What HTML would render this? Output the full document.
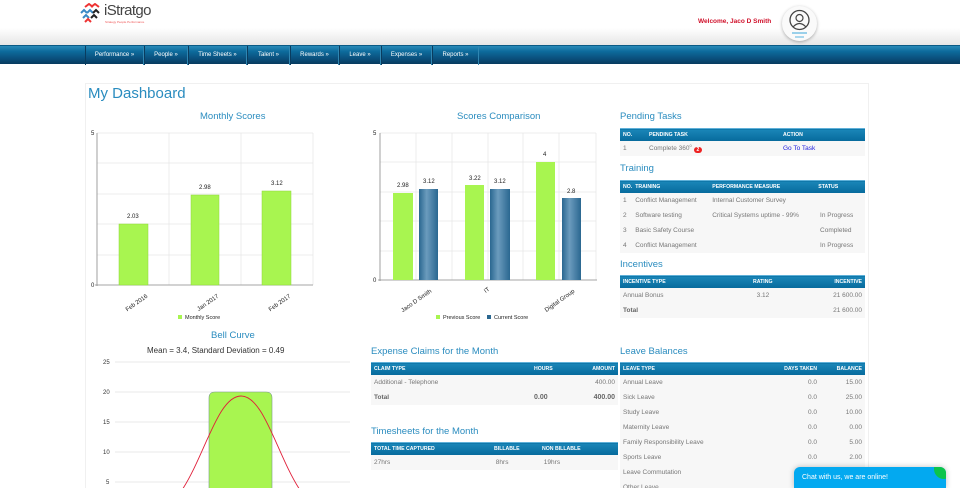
<!DOCTYPE html>
<html style="width:960px;height:488px;overflow:hidden"><head><meta charset="utf-8"><style>
*{margin:0;padding:0;box-sizing:border-box}
body{width:960px;height:488px;overflow:hidden;background:#fff;font-family:"Liberation Sans",sans-serif;position:relative}
.hdr{position:absolute;left:0;top:0;width:960px;height:45px;background:linear-gradient(#fff 0,#fff 28px,#e6e6e6 45px)}
.nav{position:absolute;left:0;top:45px;width:960px;height:19px;background:linear-gradient(#2a8ab8 0,#0d6b9c 30%,#0a4f7c 70%,#073a5e 100%);border-top:1px solid #0a5a85}
.nav div{position:absolute;top:0;height:19px;line-height:19px;font-size:6px;color:#fff;text-align:center;border-left:1px solid #0a3c5e;border-right:1px solid #2f86b2}
.abs{position:absolute}
.t{position:absolute;color:#2a8cbf;font-size:9.5px}
table{border-collapse:collapse;position:absolute;font-size:6.5px;color:#777;background:#f7f7f7}
th{background:linear-gradient(#1a86b8,#066a9c);color:#fff;font-size:5.2px;font-weight:bold;text-align:left;height:12px;padding:0 3px;border-top:1px solid #5fb0d8}
td{height:15px;padding:0 3px}
td b{color:#666}
.r{text-align:right}
</style></head><body>
<div class="hdr"></div>
<svg class="abs" style="left:80px;top:3px" width="22" height="20" viewBox="0 0 22 20">
<path d="M5 4 L9 1 L13 4" stroke="#e33" stroke-width="2" fill="none"/><path d="M11 4 L15 1 L19 4" stroke="#e33" stroke-width="2" fill="none"/>
<path d="M1 10 L4 7 L7 10" stroke="#3a8ac6" stroke-width="2" fill="none"/><path d="M7 10 L10 7 L13 10" stroke="#3a8ac6" stroke-width="2" fill="none"/><path d="M13 10 L16 7 L19 10" stroke="#222" stroke-width="2" fill="none"/>
<path d="M3 15 L6 12 L9 15" stroke="#3a8ac6" stroke-width="2" fill="none"/><path d="M11 15 L14 12 L17 15" stroke="#222" stroke-width="2" fill="none"/>
<path d="M5 19 L8 16 L11 19" stroke="#e33" stroke-width="2" fill="none"/></svg>
<div class="abs" style="left:104px;top:2px;font-size:15px;color:#444;letter-spacing:-0.6px">iStratgo</div>
<div class="abs" style="left:105px;top:20px;font-size:3px;color:#e55">Strategy People Performance</div>
<div class="abs" style="left:698px;top:18px;font-size:6.5px;color:#d0102a;font-weight:bold">Welcome, Jaco D Smith</div>
<div class="abs" style="left:782px;top:6px;width:35px;height:35px;border-radius:50%;background:#fafafa;box-shadow:0 1px 3px rgba(0,0,0,.3)"></div>
<svg class="abs" style="left:787px;top:8px" width="25" height="30" viewBox="0 0 25 30"><circle cx="12.5" cy="12" r="9.5" fill="none" stroke="#444" stroke-width="1.3"/><circle cx="12.5" cy="10" r="3.5" fill="none" stroke="#444" stroke-width="1.2"/><path d="M6 19 Q12.5 12 19 19" fill="none" stroke="#444" stroke-width="1.2"/><line x1="5" y1="25" x2="20" y2="25" stroke="#5ab4e0" stroke-width="1.2"/><line x1="8" y1="29" x2="17" y2="29" stroke="#5ab4e0" stroke-width="1"/></svg>
<div class="nav">
<div style="left:85px;width:59px">Performance »</div><div style="left:144px;width:44px">People »</div><div style="left:188px;width:59px">Time Sheets »</div><div style="left:247px;width:43px">Talent »</div><div style="left:290px;width:49px">Rewards »</div><div style="left:339px;width:42px">Leave »</div><div style="left:381px;width:51px">Expenses »</div><div style="left:432px;width:47px">Reports »</div>
</div>
<div class="abs" style="left:85px;top:83px;width:784px;height:420px;border:1px solid #f0f0f0;background:#fff"></div>
<div class="abs" style="left:88px;top:85px;font-size:15px;color:#2a8cbf">My Dashboard</div>

<div class="t" style="left:200px;top:111px">Monthly Scores</div>
<svg class="abs" style="left:85px;top:125px" width="240" height="200" viewBox="85 125 240 200" font-family="Liberation Sans" font-size="6" fill="#222">
<g stroke="#e6e6e6" stroke-width="0.7"><line x1="97" y1="133" x2="313" y2="133"/><line x1="97" y1="163" x2="313" y2="163"/><line x1="97" y1="194" x2="313" y2="194"/><line x1="97" y1="224" x2="313" y2="224"/><line x1="97" y1="255" x2="313" y2="255"/><line x1="169" y1="133" x2="169" y2="285"/><line x1="241" y1="133" x2="241" y2="285"/><line x1="313" y1="133" x2="313" y2="285"/></g>
<line x1="97" y1="133" x2="97" y2="286" stroke="#888" stroke-width="0.8"/><line x1="95" y1="285" x2="313" y2="285" stroke="#888" stroke-width="0.8"/>
<text x="91" y="135">5</text><text x="91" y="287">0</text>
<g fill="#a8f550" stroke="#8ed63a" stroke-width="0.5"><rect x="119" y="224" width="29" height="61"/><rect x="191" y="195" width="28" height="90"/><rect x="262" y="191" width="29" height="94"/></g>
<text x="127" y="218">2.03</text><text x="199" y="189">2.98</text><text x="271" y="185">3.12</text>
<text transform="translate(148,297) rotate(-35)" text-anchor="end">Feb 2016</text><text transform="translate(219,297) rotate(-35)" text-anchor="end">Jan 2017</text><text transform="translate(291,297) rotate(-35)" text-anchor="end">Feb 2017</text>
<rect x="178" y="315" width="4" height="4" fill="#a8f550"/><text x="185" y="319" font-size="5.5">Monthly Score</text>
</svg>

<div class="t" style="left:457px;top:111px">Scores Comparison</div>
<svg class="abs" style="left:365px;top:125px" width="245" height="200" viewBox="365 125 245 200" font-family="Liberation Sans" font-size="6" fill="#222">
<g stroke="#e6e6e6" stroke-width="0.7"><line x1="380" y1="133" x2="596" y2="133"/><line x1="380" y1="162" x2="596" y2="162"/><line x1="380" y1="192" x2="596" y2="192"/><line x1="380" y1="221" x2="596" y2="221"/><line x1="380" y1="251" x2="596" y2="251"/><line x1="416" y1="133" x2="416" y2="280"/><line x1="452" y1="133" x2="452" y2="280"/><line x1="488" y1="133" x2="488" y2="280"/><line x1="523" y1="133" x2="523" y2="280"/><line x1="559" y1="133" x2="559" y2="280"/><line x1="596" y1="133" x2="596" y2="280"/></g>
<line x1="380" y1="133" x2="380" y2="281" stroke="#888" stroke-width="0.8"/><line x1="378" y1="280" x2="597" y2="280" stroke="#888" stroke-width="0.8"/>
<text x="373" y="135">5</text><text x="373" y="282">0</text>
<defs><linearGradient id="bl" x1="0" x2="1"><stop offset="0" stop-color="#2a6790"/><stop offset=".4" stop-color="#6b9bbd"/><stop offset="1" stop-color="#2a6790"/></linearGradient></defs>
<g fill="#a8f550"><rect x="393" y="193" width="20" height="87"/><rect x="465" y="185" width="19" height="95"/><rect x="536" y="162" width="19" height="118"/></g>
<g fill="url(#bl)"><rect x="419" y="189" width="19" height="91"/><rect x="490" y="189" width="20" height="91"/><rect x="562" y="198" width="19" height="82"/></g>
<text x="397" y="187">2.98</text><text x="423" y="183">3.12</text><text x="469" y="180">3.22</text><text x="494" y="183">3.12</text><text x="543" y="156">4</text><text x="567" y="193">2.8</text>
<text transform="translate(432,292) rotate(-35)" text-anchor="end">Jaco D Smith</text><text transform="translate(490,290) rotate(-35)" text-anchor="end">IT</text><text transform="translate(575,292) rotate(-35)" text-anchor="end">Digital Group</text>
<rect x="436" y="315" width="4" height="4" fill="#a8f550"/><text x="443" y="319" font-size="5.5">Previous Score</text><rect x="487" y="315" width="4" height="4" fill="#2a6790"/><text x="494" y="319" font-size="5.5">Current Score</text>
</svg>

<div class="t" style="left:211px;top:330px">Bell Curve</div>
<div class="abs" style="left:147px;top:346px;font-size:8px;color:#333">Mean = 3.4, Standard Deviation = 0.49</div>
<svg class="abs" style="left:95px;top:355px" width="260" height="133" viewBox="95 355 260 133" font-family="Liberation Sans" font-size="6" fill="#333">
<g stroke="#e3e3e3" stroke-width="0.8"><line x1="115" y1="362" x2="350" y2="362"/><line x1="115" y1="392" x2="350" y2="392"/><line x1="115" y1="422" x2="350" y2="422"/><line x1="115" y1="452" x2="350" y2="452"/><line x1="115" y1="482" x2="350" y2="482"/></g>
<text x="103" y="364">25</text><text x="103" y="394">20</text><text x="103" y="424">15</text><text x="103" y="454">10</text><text x="106" y="484">5</text>
<path d="M209 500 V398 Q209 392 215 392 H266 Q272 392 272 398 V500 Z" fill="#a8f550" stroke="#7a9a8a" stroke-width="0.6"/>
<path d="M182 490 C205 455 218 396 241 396 C264 396 277 455 300 490" fill="none" stroke="#e0203a" stroke-width="0.9"/>
</svg>

<div class="t" style="left:620px;top:111px">Pending Tasks</div>
<table style="left:620px;top:128px;width:245px">
<tr><th style="width:26px">NO.</th><th style="width:134px">PENDING TASK</th><th>ACTION</th></tr>
<tr><td>1</td><td>Complete 360<sup style="font-size:4px">0</sup> <span style="background:#e22;color:#fff;border-radius:4px;padding:0 3px;font-size:5px;font-weight:bold">2</span></td><td style="color:#2222dd">Go To Task</td></tr></table>
<div class="t" style="left:620px;top:163px">Training</div>
<table style="left:620px;top:180px;width:245px">
<tr><th style="width:12px;padding-right:0">NO.</th><th style="width:77px">TRAINING</th><th style="width:106px">PERFORMANCE MEASURE</th><th>STATUS</th></tr>
<tr><td>1</td><td>Conflict Management</td><td>Internal Customer Survey</td><td></td></tr>
<tr><td>2</td><td>Software testing</td><td>Critical Systems uptime - 99%</td><td>&nbsp;In Progress</td></tr>
<tr><td>3</td><td>Basic Safety Course</td><td></td><td>&nbsp;Completed</td></tr>
<tr><td>4</td><td>Conflict Management</td><td></td><td>&nbsp;In Progress</td></tr></table>
<div class="t" style="left:620px;top:259px">Incentives</div>
<table style="left:620px;top:275px;width:245px">
<tr><th style="width:130px">INCENTIVE TYPE</th><th style="width:50px">RATING</th><th class="r">INCENTIVE</th></tr>
<tr><td>Annual Bonus</td><td>&nbsp;&nbsp;3.12</td><td class="r">21 600.00</td></tr>
<tr><td><b>Total</b></td><td></td><td class="r">21 600.00</td></tr></table>

<div class="t" style="left:371px;top:346px">Expense Claims for the Month</div>
<table style="left:371px;top:362px;width:247px">
<tr><th style="width:160px">CLAIM TYPE</th><th style="width:40px">HOURS</th><th class="r">AMOUNT</th></tr>
<tr><td>Additional - Telephone</td><td></td><td class="r">400.00</td></tr>
<tr><td><b>Total</b></td><td><b style="font-size:7px">0.00</b></td><td class="r"><b style="font-size:7px">400.00</b></td></tr></table>
<div class="t" style="left:371px;top:426px">Timesheets for the Month</div>
<table style="left:371px;top:442px;width:247px">
<tr><th style="width:120px">TOTAL TIME CAPTURED</th><th style="width:48px">BILLABLE</th><th>NON BILLABLE</th></tr>
<tr><td>27hrs</td><td>&nbsp;8hrs</td><td>&nbsp;19hrs</td></tr></table>

<div class="t" style="left:620px;top:346px">Leave Balances</div>
<table style="left:620px;top:362px;width:245px">
<tr><th style="width:150px">LEAVE TYPE</th><th class="r" style="width:50px">DAYS TAKEN</th><th class="r">BALANCE</th></tr>
<tr><td>Annual Leave</td><td class="r">0.0</td><td class="r">15.00</td></tr>
<tr><td>Sick Leave</td><td class="r">0.0</td><td class="r">25.00</td></tr>
<tr><td>Study Leave</td><td class="r">0.0</td><td class="r">10.00</td></tr>
<tr><td>Maternity Leave</td><td class="r">0.0</td><td class="r">0.00</td></tr>
<tr><td>Family Responsibility Leave</td><td class="r">0.0</td><td class="r">5.00</td></tr>
<tr><td>Sports Leave</td><td class="r">0.0</td><td class="r">2.00</td></tr>
<tr><td>Leave Commutation</td><td></td><td></td></tr>
<tr><td>Other Leave</td><td></td><td></td></tr></table>

<div class="abs" style="left:794px;top:467px;width:152px;height:21px;background:#03a9f0;border-radius:6px 6px 0 0;box-shadow:0 0 6px rgba(0,0,0,.25);overflow:hidden">
<div style="position:absolute;right:-8px;top:-8px;width:20px;height:20px;border-radius:50%;background:#0cc44a"></div>
<div style="position:absolute;left:8px;top:7px;font-size:7px;color:#fff">Chat with us, we are online!</div></div>
</body></html>
